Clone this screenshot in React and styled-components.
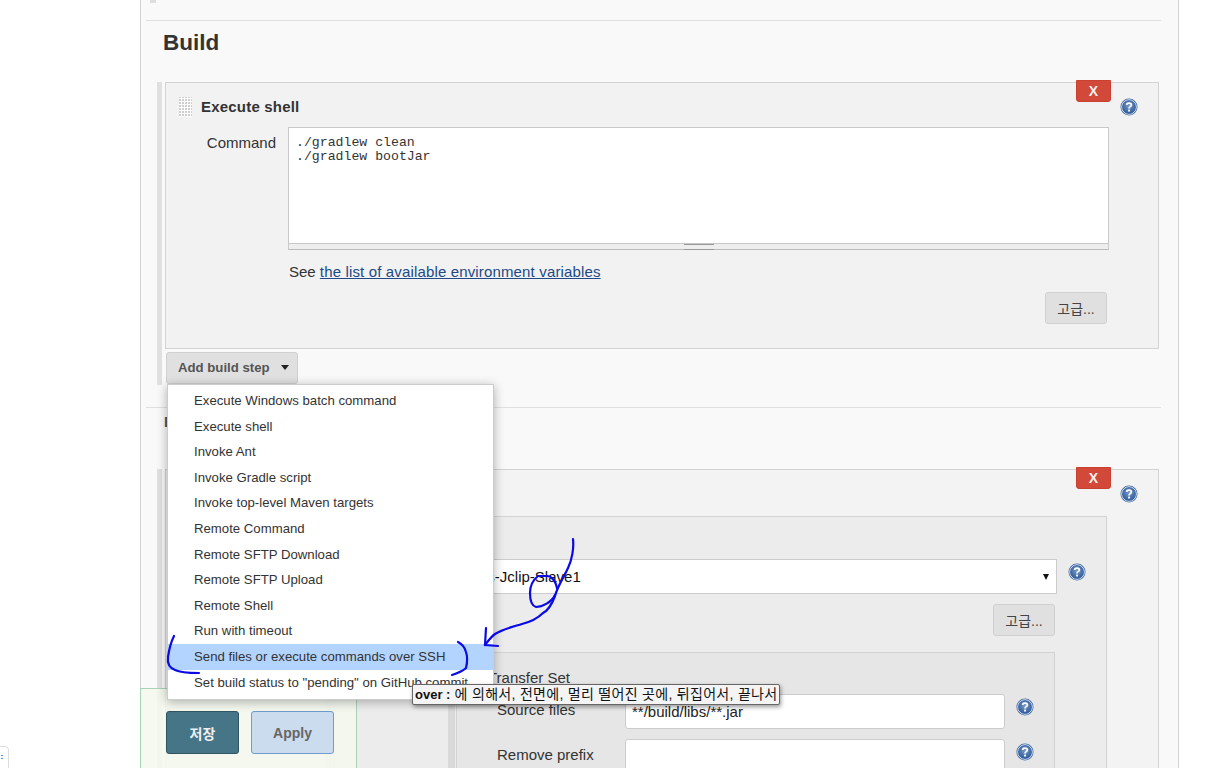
import React from "react";
import styled, { createGlobalStyle } from "styled-components";

const SANS = `"Liberation Sans", "Noto Sans CJK KR", Arial, sans-serif`;

const GlobalStyle = createGlobalStyle`
  html, body {
    margin: 0;
    padding: 0;
    background: #fff;
    overflow: hidden;
  }
  * { box-sizing: border-box; }
`;

const Page = styled.div`
  position: relative;
  width: 1209px;
  height: 768px;
  overflow: hidden;
  background: #fff;
  font-family: ${SANS};
  font-size: 15px;
  color: #333;
`;

const Panel = styled.main`
  margin-left: 140px;
  width: 1039px;
  height: 768px;
  overflow: hidden;
  background: #f9f9f9;
  border-left: 1px solid #d3d3d3;
  border-right: 1px solid #d3d3d3;
`;

const TopStub = styled.div`
  height: 20px;
  padding-left: 9px;
  &::before {
    content: "";
    display: block;
    width: 6px;
    height: 3px;
    background: #dedede;
  }
`;

const Divider = styled.hr`
  margin: ${(p) => p.$top || 0}px 0 0 5px;
  width: 1015px;
  height: 1px;
  border: 0;
  background: #e0e0e0;
`;

const SectionTitle = styled.h2`
  margin: 0 0 18px;
  padding-left: 22px;
  font-size: 22.5px;
  line-height: 43px;
  font-weight: 700;
  color: #333;
`;

const StepGroup = styled.section`
  margin-left: 16px;
  width: 1002px;
  padding-left: 3px;
  border-left: 5px solid #e0e0e0;
  padding-bottom: 1px;
`;

const StepBox = styled.div`
  position: relative;
  width: 994px;
  padding: 9px 0 ${(p) => p.$bottom ?? 24}px;
  background: ${(p) => p.$bg || "#f2f2f2"};
  border: 1px solid #d3d3d3;
`;

const DeleteButton = styled.button`
  position: absolute;
  top: -3px;
  right: 47px;
  width: 35px;
  height: 22px;
  padding: 0;
  border: 1px solid #c9402f;
  border-radius: 0 0 3px 3px;
  background: #d24939;
  color: #f6f0ee;
  font: 700 14px ${SANS};
`;

const StepHeader = styled.div`
  display: flex;
  align-items: center;
  height: 30px;
  padding: 0 20px 0 13px;
`;

const DragHandle = styled.span`
  width: 13px;
  height: 20px;
  margin-right: 9px;
  background-color: #fff;
  background-image: repeating-linear-gradient(0deg, #fdfdfd 0 1px, transparent 1px 3px),
    repeating-linear-gradient(90deg, #cfcfcf 0 2px, #fbfbfb 2px 3px);
`;

const StepTitle = styled.span`
  flex: 1;
  padding-bottom: 2px;
  font-weight: 700;
  letter-spacing: 0.2px;
  color: #333;
  white-space: nowrap;
`;

const CommandRow = styled.div`
  display: grid;
  grid-template-columns: 122px 821px;
  margin-top: 5px;
`;

const FieldLabel = styled.label`
  padding: 6px 12px 0 0;
  line-height: 20px;
  text-align: right;
`;

const CommandInput = styled.textarea`
  display: block;
  width: 100%;
  height: 117px;
  margin: 0;
  padding: 8px 7px;
  border: 1px solid #c8c8c8;
  background: #fff;
  color: #333;
  font: 13.2px/14px "Liberation Mono", "DejaVu Sans Mono", monospace;
  resize: none;
  outline: none;
`;

const Grippie = styled.div`
  display: flex;
  justify-content: center;
  height: 6px;
  background: #eee;
  border: 1px solid #ccc;
  border-top: 0;
  border-bottom-color: #bbb;
  &::before {
    content: "";
    width: 30px;
    height: 4px;
    border-top: 1px solid #999;
    border-bottom: 1px solid #999;
  }
`;

const HintRow = styled.div`
  margin: 12px 0 0 123px;
  line-height: 20px;
`;

const HintLink = styled.a`
  color: #204a87;
  letter-spacing: 0.15px;
  text-decoration: underline;
`;

const ButtonRow = styled.div`
  display: flex;
  justify-content: flex-end;
  margin-top: ${(p) => p.$top}px;
  padding-right: ${(p) => p.$right}px;
`;

const PlainButton = styled.button`
  width: 62px;
  height: 32px;
  padding: 0;
  border: 1px solid #cfcfcf;
  border-radius: 3px;
  background: #e0e0e0;
  color: #444;
  font: 14px ${SANS};
  white-space: nowrap;
`;

const AddStepWrap = styled.div`
  position: relative;
  width: max-content;
  margin: 3px 0 0 1px;
`;

const AddStepButton = styled.button`
  display: flex;
  align-items: center;
  gap: 10px;
  height: 32px;
  width: 132px;
  padding: 0 0 2px 11px;
  border: 1px solid #d0d0d0;
  border-radius: 3px;
  background: #e0e0e0;
  color: #555;
  font: 700 13.2px ${SANS};
  white-space: nowrap;
  &::after {
    content: "";
    border-left: 4px solid transparent;
    border-right: 4px solid transparent;
    border-top: 5px solid #222;
    margin-left: 1px;
  }
`;

const StepMenu = styled.ul`
  position: absolute;
  z-index: 5;
  top: 100%;
  left: 1px;
  width: 327px;
  margin: 0;
  padding: 3px 0 4px;
  list-style: none;
  background: #fff;
  border: 1px solid #ccc;
  box-shadow: 0 2px 10px rgba(0, 0, 0, 0.3);
`;

const StepMenuItem = styled.li`
  height: 25.6px;
  padding-left: 26px;
  font-size: 13.2px;
  line-height: 25.6px;
  color: #333;
  white-space: nowrap;
  background: ${(p) => (p.$active ? "#b3d4ff" : "transparent")};
`;

const SectionLabel = styled.div`
  margin: 4px 0 37px 23px;
  font-weight: 700;
  font-size: 14px;
  line-height: 20px;
  color: #555;
`;

const PublisherWrap = styled.div`
  display: flex;
  gap: 1px;
  margin: 7px 51px 0 159px;
`;

const BlockBar = styled.div`
  flex: none;
  width: 7px;
  background: ${(p) => p.$color};
`;

const PublisherPanel = styled.div`
  flex: 1;
  min-width: 0;
  padding-top: 42px;
  background: #ececec;
  border: 1px solid #d3d3d3;
  border-bottom: 0;
`;

const ServerRow = styled.div`
  display: grid;
  grid-template-columns: 106px 617px 29px;
  align-items: center;
`;

const ServerSelect = styled.div`
  display: flex;
  align-items: center;
  justify-content: space-between;
  height: 35px;
  padding: 0 7px 0 3px;
  border: 1px solid #ccc;
  background: #fff;
  color: #111;
  white-space: nowrap;
`;

const SelectCaret = styled.span`
  width: 0;
  height: 0;
  border-left: 3.5px solid transparent;
  border-right: 3.5px solid transparent;
  border-top: 6px solid #111;
`;

const HelpSlot = styled.span`
  display: flex;
  padding: 0 0 10px 11px;
`;

const HelpGlyph = styled.svg`
  flex: none;
  display: block;
  width: 18px;
  height: 18px;
`;

const TransferWrap = styled.div`
  display: flex;
  gap: 1px;
  margin: 16px 51px 0 114px;
`;

const TransferPanel = styled.div`
  flex: 1;
  min-width: 0;
  height: 200px;
  padding-top: 15px;
  background: #e6e6e6;
  border: 1px solid #d3d3d3;
`;

const TransferTitle = styled.div`
  padding-left: 31px;
  line-height: 20px;
  margin-bottom: 6px;
`;

const TransferRow = styled.div`
  display: grid;
  grid-template-columns: 168px 380px 29px;
  align-items: center;
  margin-bottom: 10px;
`;

const TransferLabel = styled.label`
  padding: 0 0 4px 40px;
`;

const TextField = styled.input`
  display: block;
  width: 100%;
  height: 35px;
  padding: 0 6px;
  border: 1px solid #ccc;
  border-radius: 3px;
  background: #fff;
  color: #222;
  font: 15px ${SANS};
  outline: none;
`;

const SaveBar = styled.footer`
  position: absolute;
  z-index: 3;
  left: 140px;
  bottom: 0;
  display: flex;
  gap: 12px;
  width: 217px;
  height: 80px;
  padding: 22px 0 0 25px;
  background: rgba(244, 248, 238, 0.9);
  border: 1px solid #a9d3b9;
  border-bottom: 0;
`;

const SaveButton = styled.button`
  width: ${(p) => p.$width}px;
  height: 43px;
  padding: 0;
  border: 1px solid ${(p) => (p.$primary ? "#2f5563" : "#6f9ccc")};
  border-radius: 3px;
  background: ${(p) => (p.$primary ? "#457587" : "#cbdcee")};
  color: ${(p) => (p.$primary ? "#f0f0f0" : "#666")};
  font: 700 14px ${SANS};
`;

const CornerTab = styled.div`
  position: absolute;
  left: -1px;
  bottom: -4px;
  width: 10px;
  height: 26px;
  padding-top: 8px;
  border: 1px solid #ddd;
  border-radius: 0 4px 0 0;
  background: #fff;
  &::before {
    content: "";
    display: block;
    width: 2px;
    height: 5px;
    margin-left: 1px;
    background: linear-gradient(#4a90e2 0 1px, transparent 1px 3px, #4a90e2 3px 4px, transparent 4px);
  }
`;

const WordTooltip = styled.div`
  position: absolute;
  z-index: 7;
  left: 412px;
  top: 684px;
  width: 368px;
  height: 21px;
  padding-left: 2px;
  background: #f4f4f4;
  border: 1px solid #666;
  border-radius: 2px;
  box-shadow: 1px 2px 4px rgba(0, 0, 0, 0.4);
  color: #111;
  font-size: 14px;
  line-height: 19px;
  letter-spacing: 0.3px;
  white-space: nowrap;
  b {
    font-size: 13px;
    font-weight: 700;
    letter-spacing: 0;
  }
`;

const InkLayer = styled.svg`
  position: absolute;
  z-index: 6;
  left: 0;
  top: 0;
  width: 1209px;
  height: 768px;
  pointer-events: none;
  fill: none;
  stroke: #0a0ae6;
  stroke-width: 2.2;
  stroke-linecap: round;
  stroke-linejoin: round;
`;

const HelpIcon = () => (
  <HelpGlyph viewBox="0 0 18 18">
    <defs>
      <radialGradient id="helpFill" cx="50%" cy="40%" r="60%">
        <stop offset="0%" stopColor="#7d9cc8" />
        <stop offset="100%" stopColor="#2f5b9a" />
      </radialGradient>
    </defs>
    <circle cx="9" cy="9" r="8.5" fill="#3a64a0" />
    <circle cx="9" cy="9" r="7.3" fill="none" stroke="#dfe7f2" strokeWidth="1" />
    <circle cx="9" cy="9" r="6.6" fill="url(#helpFill)" />
    <path
      d="M6.6 6.8 C6.8 4.6 11.4 4.5 11.4 6.9 C11.4 8.6 9 8.6 9 10.4"
      fill="none"
      stroke="#fff"
      strokeWidth="1.7"
    />
    <rect x="8.1" y="11.6" width="1.9" height="1.9" fill="#fff" />
  </HelpGlyph>
);

const MENU_ITEMS = [
  "Execute Windows batch command",
  "Execute shell",
  "Invoke Ant",
  "Invoke Gradle script",
  "Invoke top-level Maven targets",
  "Remote Command",
  "Remote SFTP Download",
  "Remote SFTP Upload",
  "Remote Shell",
  "Run with timeout",
  "Send files or execute commands over SSH",
  'Set build status to "pending" on GitHub commit',
];

export default function App() {
  return (
    <Page>
      <GlobalStyle />
      <Panel>
        <TopStub />
        <Divider />
        <SectionTitle>Build</SectionTitle>

        <StepGroup>
          <StepBox>
            <DeleteButton>X</DeleteButton>
            <StepHeader>
              <DragHandle />
              <StepTitle>Execute shell</StepTitle>
              <HelpIcon />
            </StepHeader>
            <CommandRow>
              <FieldLabel>Command</FieldLabel>
              <div>
                <CommandInput readOnly defaultValue={"./gradlew clean\n./gradlew bootJar"} />
                <Grippie />
              </div>
            </CommandRow>
            <HintRow>
              See <HintLink href="#env">the list of available environment variables</HintLink>
            </HintRow>
            <ButtonRow $top={10} $right={51}>
              <PlainButton>고급...</PlainButton>
            </ButtonRow>
          </StepBox>
          <AddStepWrap>
            <AddStepButton>Add build step</AddStepButton>
            <StepMenu>
              {MENU_ITEMS.map((item, i) => (
                <StepMenuItem key={item} $active={i === 10}>
                  {item}
                </StepMenuItem>
              ))}
            </StepMenu>
          </AddStepWrap>
        </StepGroup>

        <Divider $top={22} />
        <SectionLabel>B</SectionLabel>

        <StepGroup>
          <StepBox $bg="#f3f3f3" $bottom={0}>
            <DeleteButton>X</DeleteButton>
            <StepHeader>
              <DragHandle />
              <StepTitle />
              <HelpIcon />
            </StepHeader>
            <PublisherWrap>
              <BlockBar $color="#e0e0e0" />
              <PublisherPanel>
                <ServerRow>
                  <FieldLabel>Name</FieldLabel>
                  <ServerSelect>
                    <span>Jenkins-Jclip-Slave1</span>
                    <SelectCaret />
                  </ServerSelect>
                  <HelpSlot>
                    <HelpIcon />
                  </HelpSlot>
                </ServerRow>
                <ButtonRow $top={10} $right={51}>
                  <PlainButton>고급...</PlainButton>
                </ButtonRow>
                <TransferWrap>
                  <BlockBar $color="#d9d9d9" />
                  <TransferPanel>
                    <TransferTitle>Transfer Set</TransferTitle>
                    <TransferRow>
                      <TransferLabel>Source files</TransferLabel>
                      <TextField readOnly defaultValue="**/build/libs/**.jar" />
                      <HelpSlot>
                        <HelpIcon />
                      </HelpSlot>
                    </TransferRow>
                    <TransferRow>
                      <TransferLabel>Remove prefix</TransferLabel>
                      <TextField readOnly defaultValue="" />
                      <HelpSlot>
                        <HelpIcon />
                      </HelpSlot>
                    </TransferRow>
                  </TransferPanel>
                </TransferWrap>
              </PublisherPanel>
            </PublisherWrap>
          </StepBox>
        </StepGroup>
      </Panel>

      <SaveBar>
        <SaveButton $primary $width={73}>저장</SaveButton>
        <SaveButton $width={83}>Apply</SaveButton>
      </SaveBar>

      <CornerTab />

      <WordTooltip>
        <b>over :</b> 에 의해서, 전면에, 멀리 떨어진 곳에, 뒤집어서, 끝나서
      </WordTooltip>

      <InkLayer viewBox="0 0 1209 768">
        <path d="M174 636 C171 642 169 650 168 657 C167 664 170 668 175 670 C181 673 190 673 199 673" />
        <path d="M458 642 C462 644 465 648 466 652 C468 658 467 664 466 668 C463 671 458 673 452 675" />
        <path d="M573 539 C574 548 572 560 568 568 C564 577 558 585 555 596 C552 604 549 610 543 613 C537 619 530 622 522 624 C512 627 503 629 495 634 C491 637 488 641 485 645" />
        <path d="M557 588 C556 582 552 576 547 576 L538 576 C533 580 530 586 530 593 C530 601 532 606 536 607 C542 607 552 602 555 595" />
        <path d="M486 628 L485 645 L498 646" />
      </InkLayer>
    </Page>
  );
}
